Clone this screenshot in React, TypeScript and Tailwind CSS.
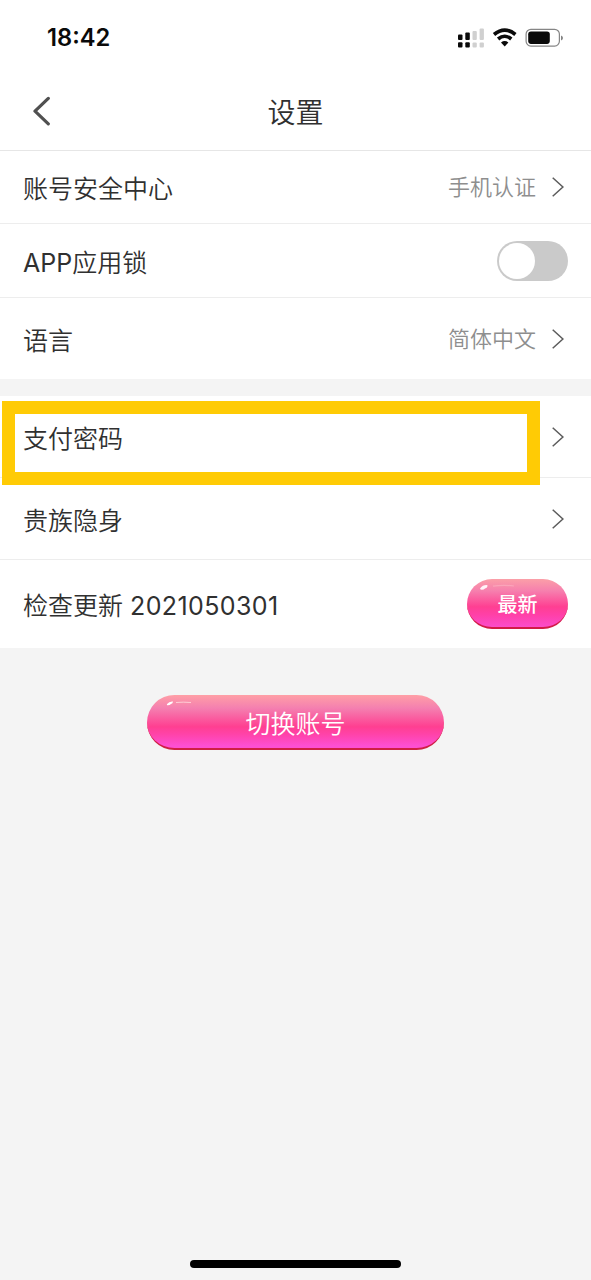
import type { ReactNode } from 'react';

function Chevron() {
  return (
    <svg className="ml-[15px] mr-[27px] h-5 w-3 shrink-0" viewBox="0 0 12 20" fill="none" stroke="#5c5c5c" strokeWidth="1.5">
      <path d="M0.7 0.8 10.9 10 0.7 19.2" />
    </svg>
  );
}

function Row({ label, height, last = false, children }: { label: ReactNode; height: string; last?: boolean; children: ReactNode }) {
  return (
    <div className={`flex items-center justify-between bg-white pl-[23px] ${height} ${last ? '' : 'border-b border-[#ededed]'}`}>
      <span className="translate-y-[2px] whitespace-pre text-[25px] leading-9 text-[#303030]">{label}</span>
      <div className="flex items-center">{children}</div>
    </div>
  );
}

function Value({ children }: { children: ReactNode }) {
  return <span className="-translate-x-px text-[22px] leading-8 text-[#8e8e8e]">{children}</span>;
}

function StatusIcons() {
  return (
    <svg className="mr-[27px] h-6 w-[107px]" viewBox="457 25 107 24">
      <g fill="#0a0a0a">
        <rect x="458" y="33.4" width="4.5" height="5.5" rx="1" />
        <rect x="465.3" y="31.4" width="4.5" height="7.5" rx="1" />
        <rect x="458" y="41.2" width="4.5" height="5.2" rx="1" />
        <rect x="465.3" y="41.2" width="4.5" height="5.2" rx="1" />
      </g>
      <g fill="#d0d0d0">
        <rect x="472.5" y="29.9" width="4.3" height="9" rx="1" />
        <rect x="479.6" y="27.4" width="4.3" height="11.5" rx="1" />
        <rect x="472.5" y="41.4" width="4.3" height="5" rx="1" />
        <rect x="479.6" y="41.4" width="4.3" height="5" rx="1" />
      </g>
      <g fill="none" stroke="#0a0a0a" strokeWidth="3.6">
        <path d="M494 33.5Q504.7 24.7 515.4 33.5" />
        <path d="M498.1 38Q504.7 32.5 511.3 38" />
      </g>
      <path d="M501 41.4Q504.7 38.7 508.4 41.4L504.7 45.4Z" fill="#0a0a0a" />
      <rect x="526.1" y="28.3" width="33.3" height="16.8" rx="4.8" fill="none" stroke="#858585" strokeWidth="1.2" />
      <rect x="528.2" y="30.5" width="21.6" height="12.4" rx="2.8" fill="#0a0a0a" />
      <path d="M561 34.4v5q2-.6 2-2.5t-2-2.5z" fill="#858585" />
    </svg>
  );
}

export default function App() {
  return (
    <div className="flex h-[1280px] w-[591px] flex-col overflow-hidden bg-[#f4f4f4] font-['Inter','Noto_Sans_CJK_SC',sans-serif] font-[350]">
      <header className="h-[151px] shrink-0 border-b border-[#e6e6e6] bg-white">
        <div className="flex h-[75px] items-center justify-between pl-[47px]">
          <span className="text-[23.7px] font-semibold leading-7 text-[#0a0a0a]">18:42</span>
          <StatusIcons />
        </div>
        <div className="grid h-[75px] grid-cols-[80px_1fr_80px] items-center">
          <svg className="ml-8 mt-[-3px] h-[30px] w-5" viewBox="0 0 20 30" fill="none" stroke="#505050" strokeWidth="3.2" strokeLinecap="round" strokeLinejoin="round">
            <path d="M16.3 2.4 3 15.2 16.3 27.8" />
          </svg>
          <h1 className="text-center text-[28px] leading-10 text-[#303030]">设置</h1>
        </div>
      </header>

      <main className="flex flex-col">
        <Row label="账号安全中心" height="h-[73px]">
          <Value>手机认证</Value>
          <Chevron />
        </Row>
        <Row label={<><span className="font-normal">APP</span>应用锁</>} height="h-[74px]">
          <div className="mr-[23px] flex h-10 w-[71px] items-center rounded-full bg-[#cacaca] pl-0.5">
            <div className="h-9 w-9 rounded-full bg-white" />
          </div>
        </Row>
        <Row label="语言" height="h-[81px]" last>
          <Value>简体中文</Value>
          <Chevron />
        </Row>

        <section className="relative mt-[17px]">
          <Row label="支付密码" height="h-[82px]">
            <Chevron />
          </Row>
          <Row label="贵族隐身" height="h-[82px]">
            <Chevron />
          </Row>
          <Row label={<>检查更新 <span className="font-normal tracking-[0.4px]">2021050301</span></>} height="h-[88px]" last>
            <button className="relative mr-[23px] flex h-[50px] w-[101px] items-center justify-center rounded-full border-b-2 border-[#d21b47] bg-[linear-gradient(to_bottom,#fb9fa8_0%,#f67fae_25%,#ff3f92_58%,#ff40a8_75%,#fb4ccb_100%)] text-[20px] font-medium text-white">
              <span className="translate-y-[2px]">最新</span>
              <svg className="absolute left-3 top-1 h-3 w-9" viewBox="0 0 36 12">
                <path d="M1 5.5Q4 1.6 8.5 2.2 8.6 5 6 5.4 4.5 7.2 1.6 6.6Z" fill="#fff" opacity=".9" />
                <path d="M14 3.2Q24 1.6 35 3" fill="none" stroke="#ffd0d5" strokeWidth="1.2" opacity=".35" />
              </svg>
            </button>
          </Row>
          <div className="pointer-events-none absolute left-[2px] top-[5px] h-[84px] w-[538px] border-[13px] border-[#ffcb05]" />
        </section>

        <button className="relative mx-auto mt-[47px] flex h-[55px] w-[297px] items-center justify-center rounded-full border-b-2 border-[#cf1f43] bg-[linear-gradient(to_bottom,#ff9fa6_0%,#f47fb0_25%,#ff3f91_60%,#ff43aa_75%,#fd4fd2_96%)] text-[25px] text-white">
          <span className="translate-y-[3px]">切换账号</span>
          <svg className="absolute left-[19px] top-[5px] h-2 w-7" viewBox="0 0 28 8">
            <path d="M.8 4.2Q3.5 1 7 1.5 6.8 3.8 5 4 3.6 5.4 1.2 5.2Z" fill="#fff" />
            <path d="M10 2.5Q17 1.8 25 2.5" fill="none" stroke="#ffdce0" strokeWidth="1" opacity=".8" />
          </svg>
        </button>
      </main>

      <footer className="mt-auto flex justify-center pb-3">
        <div className="h-2 w-[211px] rounded-full bg-black" />
      </footer>
    </div>
  );
}
